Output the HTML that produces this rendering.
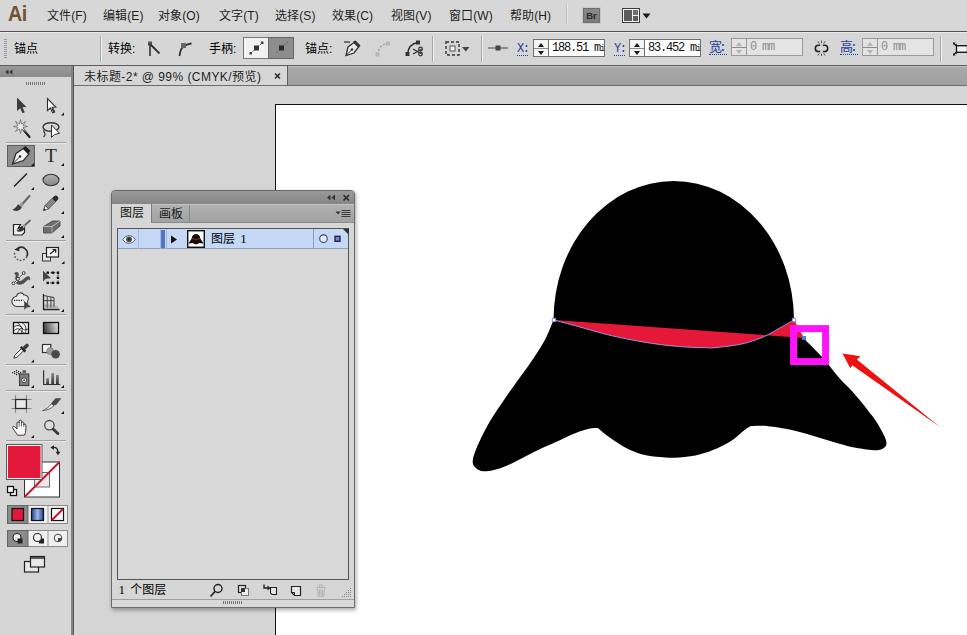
<!DOCTYPE html>
<html lang="zh-CN">
<head>
<meta charset="utf-8">
<title>Ai</title>
<style>
*{box-sizing:border-box;margin:0;padding:0}
html,body{width:967px;height:635px;overflow:hidden;background:#d5d5d5;font-family:"Liberation Sans","Noto Sans CJK SC",sans-serif;color:#222;}
.abs{position:absolute}
#menubar{left:0;top:0;width:967px;height:31px;background:#d7d7d7;}
#menubar .mi{position:absolute;top:7px;font-size:12px;line-height:18px;color:#1e1e1e;white-space:nowrap;letter-spacing:0.1px}
#mline{left:0;top:31px;width:967px;height:1px;background:#505050}
#ctrl{left:0;top:32px;width:967px;height:33px;background:#d6d6d6;border-top:1px solid #ececec}
#ctrl .t{position:absolute;top:7px;font-size:12px;line-height:18px;color:#000;white-space:nowrap}
#tabbar{left:74px;top:66px;width:894px;height:20px;background:linear-gradient(#a8a8a8,#a0a0a0);border-top:1px solid #c2c2c2;border-bottom:1px solid #6c6c6c}
#doctab{letter-spacing:0.45px;left:74px;top:66px;width:214px;height:20px;background:#d6d6d6;border-right:1px solid #5e5e5e;border-bottom:1px solid #6c6c6c;font-size:12px;line-height:23px;color:#1e1e1e;padding-left:10px;white-space:nowrap}
#tools{left:0;top:66px;width:74px;height:569px;background:#d6d6d6;border-right:1px solid #555;box-shadow:inset -2px 0 0 #828282}
#tools .hd{position:absolute;left:0;top:0;width:71px;height:11px;background:linear-gradient(#9a9a9a,#8a8a8a)}
#canvas{left:73px;top:86px;width:894px;height:549px;background:#d5d5d5}
#artboard{left:275px;top:104px;width:700px;height:540px;background:#fff;border:1px solid #111}

#ailogo{left:8px;top:2px;font-size:21.5px;font-weight:bold;line-height:25px;color:#6f5233;letter-spacing:-0.5px;transform:scaleX(0.92);transform-origin:0 0}
#brbtn{left:583px;top:8px;width:17px;height:15px;background:linear-gradient(#8a8a8a,#7c7c7c);border:1px solid #6e6e6e;box-shadow:0 0 0 1px #c8c8c8;color:#2c2c2c;font-size:9.500px;font-weight:bold;line-height:13px;text-align:center}
#ctrl .sep{position:absolute;top:3px;width:2px;height:26px;border-left:1px solid #a8a8a8;border-right:1px solid #ececec}
#ctrl .lbl{position:absolute;top:6px;font-family:"Liberation Mono","Noto Sans CJK SC",monospace;font-size:12px;line-height:20px;color:#1b3f9c;border-bottom:1px dotted #1b3f9c;height:17px;letter-spacing:-1.5px;overflow:hidden}
#ctrl .lbl.cj{font-size:13px;top:4px;height:18px;line-height:22px;overflow:hidden;letter-spacing:-3px;padding-right:3px}
#ctrl .spin{position:absolute;top:6px;width:16px;height:18px;background:#f4f4f4;border:1px solid #6f6f6f}
#ctrl .spin i{position:absolute;left:4px;width:0;height:0;border-left:3px solid transparent;border-right:3px solid transparent}
#ctrl .spin:before{content:"";position:absolute;left:0;top:8px;width:14px;height:1px;background:#8a8a8a}
#ctrl .spin i.u{top:2.5px;border-bottom:4px solid #1a1a1a}
#ctrl .spin i.d{top:10.5px;border-top:4px solid #1a1a1a}
#ctrl .spin.dis{top:5px;background:#e4e4e4;border-color:#9a9a9a}
#ctrl .spin.dis i.u{border-bottom-color:#b4b4b4}
#ctrl .spin.dis i.d{border-top-color:#b4b4b4}
#ctrl .inp{position:absolute;top:6px;height:18px;background:#fff;border:1px solid #6f6f6f;border-left:none;font-family:"Liberation Mono",monospace;font-size:12px;line-height:17px;color:#111;padding-left:3px;white-space:nowrap;overflow:hidden;letter-spacing:-1.2px}
#ctrl .inp.dis{top:5px;background:#e4e4e4;border-color:#9a9a9a;color:#909090}

#layers{left:111px;top:190px;width:244px;height:418px;background:#d6d6d6;border:1px solid #6a6a6a;border-radius:4px 4px 0 0;box-shadow:1px 2px 4px rgba(0,0,0,.35)}
#layers .hd{position:absolute;left:0;top:0;width:242px;height:13px;background:linear-gradient(#9a9a9a,#868686);border-radius:3px 3px 0 0}
#layers .tabs{position:absolute;left:0;top:13px;width:242px;height:19px;background:linear-gradient(#b2b2b2,#a2a2a2);border-top:1px solid #c4c4c4;border-bottom:1px solid #8a8a8a}
#layers .tab1{position:absolute;left:0;top:13px;width:40px;height:19px;background:#d6d6d6;border-right:1px solid #7c7c7c;font-size:12px;line-height:19px;color:#111;padding-left:8px;white-space:nowrap}
#layers .tab2{position:absolute;left:40px;top:14px;width:38px;height:18px;border-right:1px solid #858585;font-size:12px;line-height:18px;color:#1a1a1a;padding-left:7px;white-space:nowrap}
#layers .list{position:absolute;left:5px;top:37px;width:232px;height:352px;background:#d8d8d8;border:1px solid #555}
#layers .row{position:absolute;left:6px;top:38px;width:230px;height:20px;background:#c5d9f7;border-bottom:1px solid #8fa0bd}
#layers .foot{position:absolute;left:0;top:408px;width:242px;height:8px;border-top:1px solid #a0a0a0;background:#dadada}
#layers .foot:after{content:"";position:absolute;left:111px;top:1px;width:20px;height:3px;background:repeating-linear-gradient(90deg,#777 0 1px,transparent 1px 2px)}
</style>
</head>
<body>
<div id="menubar" class="abs">
<span class="abs" id="ailogo">Ai</span>
<span class="mi" style="left:47px">文件(F)</span>
<span class="mi" style="left:103px">编辑(E)</span>
<span class="mi" style="left:158px">对象(O)</span>
<span class="mi" style="left:219px">文字(T)</span>
<span class="mi" style="left:275px">选择(S)</span>
<span class="mi" style="left:332px">效果(C)</span>
<span class="mi" style="left:391px">视图(V)</span>
<span class="mi" style="left:449px">窗口(W)</span>
<span class="mi" style="left:510px">帮助(H)</span>
<div class="abs" style="left:566px;top:3px;width:1px;height:22px;background:#c2c2c2"></div>
<div class="abs" style="left:567px;top:3px;width:1px;height:22px;background:#e6e6e6"></div>
<div class="abs" id="brbtn">Br</div>
<svg class="abs" style="left:622px;top:8px" width="30" height="16" viewBox="0 0 30 16">
<rect x="0.5" y="0.5" width="17" height="14" fill="#f2f2f2" stroke="#3c3c3c"/>
<rect x="2" y="2" width="8" height="11" fill="#5c5c5c"/><rect x="11" y="2" width="5" height="5" fill="#6e6e6e"/><rect x="11" y="8" width="5" height="5" fill="#5c5c5c"/>
<path d="M20.5 5.5h8l-4 5z" fill="#1a1a1a"/></svg>
</div>
<div id="mline" class="abs"></div>
<div id="ctrl" class="abs">
<div class="abs" style="left:4px;top:6px;width:3px;height:20px;background:repeating-linear-gradient(#9a9a9a 0 1px,transparent 1px 2px)"></div>
<span class="t" style="left:14px">锚点</span>
<div class="sep" style="left:100px"></div>
<span class="t" style="left:108px">转换:</span>
<svg class="abs" style="left:147px;top:8px" width="14" height="16" viewBox="0 0 14 16"><rect x="1" y="0.5" width="4" height="4" fill="#555"/><path d="M3 3v12" stroke="#333" stroke-width="1.6" fill="none"/><path d="M3.5 3.5l9 9" stroke="#333" stroke-width="1.8" fill="none"/></svg>
<svg class="abs" style="left:177px;top:8px" width="16" height="16" viewBox="0 0 16 16"><path d="M2.5 15C3.5 8 5 4 14.5 2.5" stroke="#333" stroke-width="1.8" fill="none"/><rect x="4" y="2" width="5" height="5" fill="#666"/></svg>
<span class="t" style="left:209px">手柄:</span>
<div class="abs" style="left:243px;top:4px;width:26px;height:22px;background:#f1f1f1;border:1px solid #777"></div>
<div class="abs" style="left:268px;top:4px;width:26px;height:22px;background:#8d8d8d;border:1px solid #666"></div>
<svg class="abs" style="left:243px;top:4px" width="51" height="22" viewBox="0 0 51 22"><path d="M8 16L19 6" stroke="#555" stroke-width="1" stroke-dasharray="2 1"/><rect x="11" y="8.5" width="5" height="5" fill="#333"/><rect x="6.5" y="15" width="2.5" height="2.5" fill="#444"/><rect x="18" y="4.500" width="2.500" height="2.500" fill="#444"/>
<path d="M33 16L38 11.500" stroke="#666" stroke-width="1" stroke-dasharray="2 1"/><rect x="36" y="8.500" width="5" height="5" fill="#2a2a2a"/><path d="M41 8l4-3" stroke="#666" stroke-width="1" stroke-dasharray="2 1"/></svg>
<span class="t" style="left:305px">锚点:</span>
<svg class="abs" style="left:343px;top:7px" width="18" height="17" viewBox="0 0 18 17"><path d="M1 2h6" stroke="#333" stroke-width="1.3"/><path d="M3 15.500L5 7l6-4.500 4.500 4.500-4.500 6z" fill="#e8e8e8" stroke="#333" stroke-width="1.300"/><path d="M10 1.500l6 6 1.500-2-5-5z" fill="#333"/><path d="M3.500 15l5-5" stroke="#333" stroke-width="1"/><circle cx="9" cy="9.500" r="1.200" fill="#333"/></svg>
<svg class="abs" style="left:375px;top:8px" width="16" height="16" viewBox="0 0 16 16"><path d="M2.500 14C3 8 6 3.500 13 2.500" stroke="#aaa" stroke-width="1.600" stroke-dasharray="2.500 1.500" fill="none"/><rect x="11" y="0.500" width="4" height="4" fill="#b5b5b5"/><rect x="0.500" y="11.500" width="4" height="4" fill="#b5b5b5"/></svg>
<svg class="abs" style="left:405px;top:7px" width="19" height="17" viewBox="0 0 19 17"><path d="M2.500 14.500C3 8 6 3.500 13 2.500" stroke="#333" stroke-width="1.600" fill="none"/><rect x="11" y="0.500" width="4" height="4" fill="#333"/><rect x="0.500" y="12" width="4" height="4" fill="#333"/><path d="M8 9l9 5M8 14l9-5" stroke="#333" stroke-width="1.300"/><circle cx="15.500" cy="9" r="1.800" fill="none" stroke="#333" stroke-width="1.200"/><circle cx="15.500" cy="14" r="1.800" fill="none" stroke="#333" stroke-width="1.200"/></svg>
<div class="sep" style="left:432px"></div>
<svg class="abs" style="left:445px;top:8px" width="26" height="16" viewBox="0 0 26 16"><rect x="1" y="1" width="13" height="13" fill="none" stroke="#333" stroke-width="1.400" stroke-dasharray="3 2"/><rect x="5" y="5" width="5" height="5" fill="#f2f2f2" stroke="#555" stroke-width="1"/><path d="M17 6h7.500l-3.750 4.500z" fill="#444"/></svg>
<div class="sep" style="left:481px"></div>
<svg class="abs" style="left:488px;top:11px" width="21" height="8" viewBox="0 0 21 8"><path d="M0 4h20" stroke="#444" stroke-width="1"/><rect x="7.500" y="1.500" width="5" height="5" fill="#444"/></svg>
<span class="lbl" style="left:517px">X:</span>
<div class="spin" style="left:533px"><i class="u"></i><i class="d"></i></div>
<div class="inp" style="left:549px;width:56px">188.51 m<span style="font-size:9px">i</span></div>
<span class="lbl" style="left:614px">Y:</span>
<div class="spin" style="left:629px"><i class="u"></i><i class="d"></i></div>
<div class="inp" style="left:645px;width:56px">83.452 m<span style="font-size:9px">i</span></div>
<span class="lbl cj" style="left:709px">宽:</span>
<div class="spin dis" style="left:731px"><i class="u"></i><i class="d"></i></div>
<div class="inp dis" style="left:747px;width:56px">0 mm</div>
<svg class="abs" style="left:813.500px;top:6.500px" width="15" height="16.800" viewBox="0 0 17 19"><path d="M7 6H5a3.500 3.500 0 0 0 0 7h2M10 6h2a3.500 3.500 0 0 1 0 7h-2" fill="none" stroke="#222" stroke-width="1.800"/><path d="M8.500 0.500v3M8.500 15.500v3M4.500 1.500l1.500 2.500M12.500 1.500L11 4M4.500 17.500L6 15M12.500 17.500L11 15" stroke="#444" stroke-width="1"/></svg>
<span class="lbl cj" style="left:840px">高:</span>
<div class="spin dis" style="left:862px"><i class="u"></i><i class="d"></i></div>
<div class="inp dis" style="left:878px;width:56px">0 mm</div>
<div class="sep" style="left:940px"></div>
<svg class="abs" style="left:951px;top:7px" width="16" height="18" viewBox="0 0 16 18"><rect x="5.500" y="5.700" width="11" height="6.600" fill="#f4f4f4" stroke="#1a1a1a" stroke-width="1.400"/><path d="M2.500 3l2.500 2.500M2.500 15l2.500-2.500" stroke="#1a1a1a" stroke-width="1.100"/><path d="M2 2.500h2.600L2 5.100zM2 15.500h2.600L2 12.900z" fill="#1a1a1a"/><path d="M5.800 3.600v2.200h-2.200zM5.800 14.400v-2.200h-2.200z" fill="#1a1a1a"/></svg>
</div>
<div id="canvas" class="abs"></div>
<div id="artboard" class="abs"></div>
<svg id="art" class="abs" style="left:0;top:0" width="967" height="635" viewBox="0 0 967 635">
<path d="M553.5,320 A120.25,139 0 0 1 794,320 C795.5,322.8 798.2,330.7 803.0,337.0 C807.8,343.3 817.0,351.2 823.0,358.0 C829.0,364.8 833.8,371.8 839.3,378.0 C844.8,384.2 850.3,389.0 855.8,395.4 C861.3,401.8 868.1,410.2 872.4,416.1 C876.7,422.0 879.2,426.2 881.5,430.5 C883.8,434.8 886.0,439.1 886.4,442.0 C886.8,444.9 885.8,446.4 884.0,447.8 C882.2,449.2 880.4,450.3 875.7,450.3 C871.0,450.3 861.9,448.9 855.8,447.8 C849.7,446.7 844.8,445.2 839.3,443.7 C833.8,442.2 828.2,440.3 822.7,438.7 C817.2,437.1 811.7,435.3 806.2,433.8 C800.7,432.3 795.1,430.8 789.6,429.6 C784.1,428.4 777.9,427.5 773.0,426.8 C768.1,426.1 763.7,425.8 760.0,425.7 C756.3,425.6 752.4,425.9 750.9,426.0 C749.9,426.6 748.1,427.3 744.7,429.9 C741.3,432.4 735.9,437.9 730.6,441.3 C725.3,444.7 718.9,447.8 713.0,450.1 C707.1,452.5 701.9,454.1 695.5,455.4 C689.1,456.7 680.3,457.4 674.4,457.7 C668.5,458.0 665.6,457.6 660.3,457.1 C655.0,456.6 648.6,456.1 642.7,454.5 C636.9,452.9 631.1,450.6 625.2,447.5 C619.4,444.4 612.2,439.2 607.6,436.0 C603.0,432.8 599.5,429.4 597.9,428.1 C596.4,428.2 592.7,428.0 589.0,428.8 C585.3,429.6 580.8,431.1 575.8,433.0 C570.8,434.9 564.8,437.9 559.3,440.4 C553.8,442.9 548.2,445.2 542.7,447.8 C537.2,450.4 531.7,453.3 526.2,456.1 C520.7,458.9 515.1,462.0 509.6,464.4 C504.1,466.8 497.7,469.1 493.0,470.2 C488.3,471.3 484.7,471.7 481.5,471.0 C478.3,470.3 475.4,468.2 474.0,466.0 C472.6,463.8 472.3,461.9 473.2,457.8 C474.1,453.7 476.8,447.3 479.6,441.2 C482.4,435.1 485.7,428.3 489.8,421.4 C493.9,414.5 499.3,406.8 504.0,399.9 C508.7,393.0 513.5,386.3 518.0,380.0 C522.5,373.7 526.3,369.0 530.8,362.3 C535.3,355.6 541.2,346.8 545.0,339.7 C548.8,332.6 552.1,323.3 553.5,320.0 Z" fill="#000"/>
<path d="M554,320 C558.0,321.1 568.6,323.9 578.1,326.5 C587.6,329.1 600.2,333.0 611.2,335.6 C622.2,338.2 633.3,340.4 644.3,342.2 C655.3,344.0 667.3,345.5 677.4,346.4 C687.5,347.3 698.8,347.5 705.0,347.7 C711.2,347.9 709.0,348.2 714.8,347.7 C720.6,347.1 732.7,345.7 739.6,344.4 C746.5,343.1 751.5,341.3 756.2,339.7 C760.9,338.1 763.7,336.9 767.8,334.8 C771.9,332.7 776.6,329.8 781.0,327.3 C785.4,324.8 791.8,321.2 794.0,320.0 L804,338 Z" fill="#e5183a"/>
<path d="M554,320 C558.0,321.1 568.6,323.9 578.1,326.5 C587.6,329.1 600.2,333.0 611.2,335.6 C622.2,338.2 633.3,340.4 644.3,342.2 C655.3,344.0 667.3,345.5 677.4,346.4 C687.5,347.3 698.8,347.5 705.0,347.7 C711.2,347.9 709.0,348.2 714.8,347.7 C720.6,347.1 732.7,345.7 739.6,344.4 C746.5,343.1 751.5,341.3 756.2,339.7 C760.9,338.1 763.7,336.9 767.8,334.8 C771.9,332.7 776.6,329.8 781.0,327.3 C785.4,324.8 791.8,321.2 794.0,320.0 " fill="none" stroke="#9b93dc" stroke-width="1"/>
<rect x="552.300" y="318.300" width="3.400" height="3.400" fill="#fff" stroke="#8a86d6" stroke-width="0.900"/>
<rect x="792.300" y="318.300" width="3.400" height="3.400" fill="#fff" stroke="#8a86d6" stroke-width="0.900"/>
<rect x="802" y="336" width="4" height="4" fill="#4a7fd0"/>
<rect x="793.600" y="328.600" width="32" height="33" fill="none" stroke="#fe14f8" stroke-width="7"/>
<path d="M842.500,353.400 L860.500,356.300 L856.800,359.500 L940,427 L852.300,365.300 L850.300,368.300 Z" fill="#f01010"/>
</svg>
<div id="layers" class="abs">
<div class="hd"></div>
<svg class="abs" style="left:213px;top:2px" width="28" height="10" viewBox="0 0 28 10"><path d="M5.500 1.500v6l-3.500-3zM10 1.500v6l-3.500-3z" fill="#333"/><path d="M18.500 2l5.500 5.500M24 2l-5.500 5.500" stroke="#2a2a2a" stroke-width="1.600"/></svg>
<div class="tabs"></div>
<div class="tab1">图层</div><div class="tab2">画板</div>
<svg class="abs" style="left:223px;top:17.500px" width="16" height="10" viewBox="0 0 16 10"><path d="M0.500 2.500h5l-2.500 3z" fill="#333"/><path d="M6.500 1.500h9M6.500 3.500h9M6.500 5.500h9M6.500 7.500h9" stroke="#3a3a3a" stroke-width="1"/></svg>
<div class="list"></div>
<div class="row">
<svg class="abs" style="left:4px;top:5.500px" width="14" height="9" viewBox="0 0 16 10"><path d="M0.800 5C3 1.500 5.500 0.700 8 0.700S13 1.500 15.200 5C13 8.500 10.500 9.300 8 9.300S3 8.500 0.800 5z" fill="#e8eef8" stroke="#555" stroke-width="1"/><circle cx="8" cy="4.800" r="3.300" fill="#555"/><circle cx="8" cy="4.800" r="1.500" fill="#2a2a2a"/></svg>
<div class="abs" style="left:20px;top:0;width:1px;height:20px;background:#a9b9d6"></div>
<div class="abs" style="left:42px;top:0;width:1px;height:20px;background:#a9b9d6"></div>
<div class="abs" style="left:43px;top:1px;width:4px;height:18px;background:#4f74c8"></div>
<div class="abs" style="left:48px;top:0;width:1px;height:20px;background:#a9b9d6"></div>
<svg class="abs" style="left:52px;top:6px" width="8" height="9" viewBox="0 0 8 9"><path d="M1 0.500l6 4-6 4z" fill="#111"/></svg>
<svg class="abs" style="left:69px;top:1px" width="18" height="18" viewBox="0 0 19 19"><rect x="0.750" y="0.750" width="17.500" height="17.500" fill="#fff" stroke="#111" stroke-width="1.500"/><path d="M5 9C5 2.500 14 2.500 14 9L17.300 14C16 15 14 13.500 12.800 13.800C11.500 15.600 7.500 15.600 6.200 13.800C5 13.500 3 15 1.700 14z" fill="#1a0d08"/><path d="M5 9q4.500 1.800 9 0" stroke="#7a3a30" stroke-width="1" fill="none"/></svg>
<span class="abs" style="left:93px;top:1px;font-size:12px;line-height:18px;color:#000;white-space:nowrap">图层 <span style="font-family:'Liberation Serif',serif;font-size:13px;margin-left:2px">1</span></span>
<div class="abs" style="left:195px;top:0;width:1px;height:20px;background:#8f9db8"></div>
<svg class="abs" style="left:199px;top:0" width="32" height="20" viewBox="0 0 32 20"><circle cx="6.500" cy="9.700" r="3.800" fill="#e4ecfa" stroke="#3a4560" stroke-width="1.100"/><rect x="18" y="7.300" width="5" height="5" fill="#7884c4" stroke="#141c4c" stroke-width="1.300"/><path d="M26 0h6v6z" fill="#333"/></svg>
</div>
<span class="abs" style="left:6.500px;top:390.500px;font-size:12px;line-height:16px;color:#000;white-space:nowrap"><span style="font-family:'Liberation Serif',serif;font-size:13px;margin-right:2px">1</span> 个图层</span>
<svg class="abs" style="left:96px;top:391px" width="146" height="18" viewBox="0 0 146 18">
<circle cx="10" cy="6.500" r="4" fill="none" stroke="#222" stroke-width="1.400"/><path d="M7 9.500l-4.500 5" stroke="#222" stroke-width="1.700"/>
<rect x="30.500" y="3.500" width="7" height="7" fill="#ddd" stroke="#222" stroke-width="1.200"/><rect x="33.500" y="6.500" width="7" height="7" fill="#eee" stroke="#777" stroke-width="1"/><rect x="33" y="6" width="4" height="4" fill="#333"/>
<path d="M56 2.500v3.500h5" fill="none" stroke="#222" stroke-width="1.400"/><path d="M59.500 3.500l3 2.500-3 2.500z" fill="#222"/><path d="M62.500 5.500h6v7h-4.500l-1.500-1.500z" fill="#e8e8e8" stroke="#222" stroke-width="1.100"/>
<path d="M83.500 4.500h9v9h-6l-3-3z" fill="#e8e8e8" stroke="#222" stroke-width="1.200"/><path d="M83.500 10.500h3v3" fill="none" stroke="#222" stroke-width="1"/>
<path d="M108.500 5.500h9M111.500 5v-2h3v2M109.500 6.500l0.800 8h5.400l0.800-8M111.500 7.500v6M113 7.500v6M114.500 7.500v6" fill="none" stroke="#b2b2b2" stroke-width="1"/>
<g fill="#888"><rect x="142" y="6" width="1" height="1"/><rect x="140" y="8" width="1" height="1"/><rect x="142" y="8" width="1" height="1"/><rect x="138" y="10" width="1" height="1"/><rect x="140" y="10" width="1" height="1"/><rect x="142" y="10" width="1" height="1"/><rect x="136" y="12" width="1" height="1"/><rect x="138" y="12" width="1" height="1"/><rect x="140" y="12" width="1" height="1"/><rect x="142" y="12" width="1" height="1"/><rect x="134" y="14" width="1" height="1"/><rect x="136" y="14" width="1" height="1"/><rect x="138" y="14" width="1" height="1"/><rect x="140" y="14" width="1" height="1"/><rect x="142" y="14" width="1" height="1"/></g>
</svg>
<div class="foot"></div>
</div>
<div id="tabbar" class="abs"></div>
<div id="doctab" class="abs">未标题-2* @ 99% (CMYK/预览)<svg class="abs" style="left:199.500px;top:7px" width="8" height="7" viewBox="0 0 8 7"><path d="M1 0.500l5 5M6 0.500L1 5.500" stroke="#2a2a2a" stroke-width="1.500"/></svg></div>
<div class="abs" style="left:0;top:65px;width:967px;height:1px;background:#5c5c5c"></div>
<div id="tools" class="abs"><div class="hd"></div>
<svg class="abs" style="left:0;top:-2px" width="72" height="571" viewBox="0 64 72 571" font-family="Liberation Serif, serif">
<defs>
<linearGradient id="gEl" x1="0" y1="0" x2="0" y2="1"><stop offset="0" stop-color="#b4b4b4"/><stop offset="1" stop-color="#858585"/></linearGradient>
<linearGradient id="gGr" x1="0" y1="0.600" x2="1" y2="0.400"><stop offset="0" stop-color="#3a3a3a"/><stop offset="1" stop-color="#e2e2e2"/></linearGradient>
<linearGradient id="gBl" x1="0" y1="0" x2="1" y2="0"><stop offset="0" stop-color="#1d3f8f"/><stop offset="0.5" stop-color="#9db8e8"/><stop offset="1" stop-color="#1d3f8f"/></linearGradient>
<linearGradient id="gBar" x1="0" y1="0" x2="0" y2="1"><stop offset="0" stop-color="#888"/><stop offset="1" stop-color="#333"/></linearGradient>
</defs>
<!-- header arrows & grip -->
<path d="M8.500 69.500v5l-3.500-2.500zM12.500 69.500v5l-3.500-2.500z" fill="#3a3a3a"/>
<path d="M26.500 82v3M28.500 82v3M30.500 82v3M32.500 82v3M34.500 82v3M36.500 82v3M38.500 82v3M40.500 82v3M42.500 82v3M44.500 82v3" stroke="#777" stroke-width="1"/>
<!-- dividers -->
<g stroke="#a2a2a2" stroke-width="1"><path d="M6 142.500h60M6 240.500h60M6 314.500h60M6 364.500h60M6 390.500h60M6 440.500h60"/></g>
<g stroke="#e9e9e9" stroke-width="1"><path d="M6 143.500h60M6 241.500h60M6 315.500h60M6 365.500h60M6 391.500h60M6 441.500h60"/></g>
<!-- small corner triangles -->
<g fill="#111">
<path d="M64 112.500v3h-3z"/><path d="M64 163v3h-3z"/><path d="M34 187v3h-3z"/><path d="M64 187v3h-3z"/>
<path d="M64 211v3h-3z"/><path d="M64 235v3h-3z"/><path d="M34 261v3h-3z"/><path d="M64.500 261v3h-3z"/><path d="M34 285v3h-3z"/>
<path d="M34 309v3h-3z"/><path d="M64 309v3h-3z"/><path d="M34 359.500v3h-3z"/><path d="M34 385v3h-3z"/><path d="M64 385v3h-3z"/>
<path d="M64 411v3h-3z"/><path d="M34 435v3h-3z"/>
</g>
<!-- row1: selection arrows -->
<path d="M17 97.500v13.500l3.200-2.800 2.300 5 2.300-1-2.300-4.900 4-0.300z" fill="#3c3c3c"/>
<path d="M47.500 98.500v12l2.900-2.500 2.300 4.700 1.800-0.800-2.300-4.600 3.600-0.300z" fill="#fff" stroke="#2e2e2e" stroke-width="1.100"/>
<path d="M51.500 108.500l2.200 4.200 1.600-0.800-2.100-4.100z" fill="#3c3c3c"/>
<!-- row2: wand, lasso -->
<path d="M22 128l7.500 9" stroke="#222" stroke-width="2.200" stroke-linecap="round"/>
<path d="M20.500 119.500l1 4.500 4-2.500-2.500 4 4.500 1-4.500 1 2.500 4-4-2.500-1 4.500-1-4.500-4 2.500 2.500-4-4.500-1 4.500-1-2.500-4 4 2.500z" fill="#eee" stroke="#6a6a6a" stroke-width="0.800"/>
<ellipse cx="51" cy="127" rx="8" ry="4.300" fill="none" stroke="#333" stroke-width="1.400"/>
<path d="M44 130c-1.500 2 1.500 2.500 1 4.500s-1 2-1.500 2.500" fill="none" stroke="#333" stroke-width="1.200"/>
<path d="M51.500 125v12.500l3-3 5 -1.200z" fill="#fff" stroke="#2e2e2e" stroke-width="1"/>
<!-- row3: pen (selected), T -->
<rect x="7.500" y="145.500" width="27" height="21" fill="#8e8e8e" stroke="#5e5e5e"/><path d="M34 163v3h-3z" fill="#111"/>
<path d="M12.500 164l3.500-10.500 7.500-5 5.500 5.500-5.500 6.500z" fill="#f2f2f2" stroke="#2a2a2a" stroke-width="1.200"/>
<path d="M22.800 148.300l2.600-2.400 5 4.800-2.600 3z" fill="#1c1c1c"/>
<path d="M13 163.500l6-6" stroke="#2a2a2a" stroke-width="1"/><circle cx="20" cy="156.500" r="1.200" fill="#1c1c1c"/>
<text x="51" y="161.600" font-size="19.500" text-anchor="middle" fill="#2b2b2b">T</text>
<!-- row4: line, ellipse -->
<path d="M14 186.500l13-13" stroke="#222" stroke-width="1.500"/>
<ellipse cx="51" cy="180" rx="8" ry="5.700" fill="url(#gEl)" stroke="#333" stroke-width="1.100"/>
<!-- row5: brush, pencil -->
<path d="M29.500 196l-7.500 8.500" stroke="#6a6a6a" stroke-width="2.200" stroke-linecap="round"/><path d="M22.800 203.300l-2.600 3" stroke="#9c9c9c" stroke-width="3.400"/>
<path d="M12.300 209.500C15 208.800 16.500 206.500 18.200 204.300L21.800 207.500C20 210.800 15.500 212.200 12.300 209.500z" fill="#3a3a3a"/>
<g transform="translate(43.400,210.600) rotate(-45)"><path d="M0 0l5-2.400v4.800z" fill="#f0f0f0" stroke="#333" stroke-width="0.800"/><path d="M0 0l2-1v2z" fill="#111"/><rect x="5" y="-2.400" width="10" height="4.800" fill="#9a9a9a" stroke="#333" stroke-width="0.800"/><path d="M5 -0.800h10M5 0.800h10" stroke="#555" stroke-width="0.600"/><path d="M15 -2.600h2.500a2.600 2.600 0 0 1 0 5.200h-2.500z" fill="#2a2a2a"/></g>
<!-- row6: blob brush, eraser -->
<path d="M13.500 224.500h7l-2.500 4 6.500-2.500v6.500l-2.500 2.500h-8.500z" fill="#f0f0f0" stroke="#222" stroke-width="1.200"/>
<path d="M30 220.500l-5.500 5" stroke="#666" stroke-width="1.800" stroke-linecap="round"/><path d="M25 225l-1.800 1.800" stroke="#999" stroke-width="2.600"/><path d="M16.300 230.800C18.800 230.200 20 228 21.500 226L24.500 228.800C23 231.500 19 232.800 16.300 230.800z" fill="#333"/>
<path d="M43.500 226.500l9-5.500h7.500v5l-8 7h-8.500z" fill="#6e6e6e" stroke="#444" stroke-width="0.800"/><path d="M43.500 226.500h8.500l8-5.500" fill="none" stroke="#bcbcbc" stroke-width="1"/><path d="M52 226.500v6.500" stroke="#bcbcbc" stroke-width="0.800"/>
<!-- row7: rotate, scale -->
<path d="M18.300 248a6.300 6.300 0 0 1 8.400 8.600" fill="none" stroke="#2a2a2a" stroke-width="1.600"/><path d="M26.700 256.600a6.300 6.300 0 0 1-11.700-5" fill="none" stroke="#555" stroke-width="1.500" stroke-dasharray="1.600 1.700"/>
<path d="M14.300 249.800l5-3.300v4.800z" fill="#2a2a2a"/>
<rect x="42.500" y="253.500" width="8" height="7.500" fill="#e4e4e4" stroke="#333" stroke-width="1"/><rect x="46.500" y="247.500" width="12" height="9.500" fill="#f2f2f2" stroke="#222" stroke-width="1.200"/>
<path d="M50 254l5.500-4.500M52.500 249.500h3.200v3.200" fill="none" stroke="#222" stroke-width="1.200"/>
<!-- row8: warp, free transform -->
<path d="M14 273.500c1.500-2.500 5-2 4.800 1 c-0.200 2.500-2.300 5 0.200 6.300 c2.500 1.200 5-2.800 7.800-4.300 c2.500-1.300 4.200 1 3.200 4 c-0.600-1.200-1.800-1.200-3.200 0.200 c-2 2-4.800 4.800-8.600 3.800 c-3.400-1-3.600-4.600-2.800-7 c0.600-1.800 0.200-3.400-1.400-4z" fill="#505050"/>
<path d="M13.500 283.300L23.700 273" stroke="#fff" stroke-width="2.400"/><path d="M13.500 283.300L23.700 273" stroke="#222" stroke-width="1"/><circle cx="13.500" cy="283.300" r="1.400" fill="#fff" stroke="#222" stroke-width="0.900"/><circle cx="23.700" cy="273" r="1.400" fill="#fff" stroke="#222" stroke-width="0.900"/><circle cx="17.900" cy="278.900" r="1.500" fill="#fff" stroke="#222" stroke-width="0.900"/>
<path d="M47.700 272.700H58V282.900H47.700" fill="none" stroke="#333" stroke-width="1" stroke-dasharray="1.500 1.500"/>
<g fill="#111"><rect x="46.500" y="271.500" width="2.400" height="2.400"/><rect x="51.700" y="271.500" width="2.400" height="2.400"/><rect x="56.800" y="271.500" width="2.400" height="2.400"/><rect x="56.800" y="276.600" width="2.400" height="2.400"/><rect x="56.800" y="281.700" width="2.400" height="2.400"/><rect x="51.700" y="281.700" width="2.400" height="2.400"/><rect x="46.500" y="281.700" width="2.400" height="2.400"/></g>
<path d="M43 270.800v10.700l2.800-2.700 5.200-0.500z" fill="#444"/>
<!-- row9: shape builder, perspective grid -->
<path d="M16.500 296.300a4 4 0 0 1 7.500-1.300a4 4 0 0 1 3.500 6.500a3.500 3.500 0 0 1-3.500 5h-6.500a4.800 4.800 0 0 1-1-10.200z" fill="#ececec" stroke="#444" stroke-width="1.100"/>
<path d="M14 300.300h9.500" stroke="#111" stroke-width="1.300" stroke-dasharray="1.200 1.100"/>
<path d="M24.200 300.800v9l2.400-2.300 4.300-0.500z" fill="#444"/>
<path d="M43.500 294v15.500h16" fill="none" stroke="#222" stroke-width="1.300"/><path d="M43.500 295.500l10.500 2v9.500M47.300 296.200v11.500M50.900 297v10.500M43.500 300.600h10.500" stroke="#333" stroke-width="0.900" fill="none"/><path d="M44 307h14M44 305.200h11" stroke="#777" stroke-width="0.700"/>
<!-- row10: mesh, gradient -->
<rect x="13.500" y="322.500" width="15" height="11" fill="#f4f4f4" stroke="#111" stroke-width="1.300"/>
<path d="M13.500 327.500c3-3 6-2.500 8.500 0.500s4 1.500 6.500 1M13.500 331.500c2.500-3 5-3.500 7-1.500s3 3 4 3.500M17 322.500c2.500 2 4.500 4 5 5.500s0 4-1 5.500M22 322.500c2.500 1.500 4 4 4 6.500s-0.500 3-1 4.500M17.500 333.500c0.500-2.500 2-4.500 4.500-5.500" fill="none" stroke="#222" stroke-width="0.900"/>
<rect x="43.500" y="322.500" width="15" height="11" fill="url(#gGr)" stroke="#111" stroke-width="1.300"/>
<!-- row11: eyedropper, blend -->
<g transform="translate(13.900,358.100) rotate(-44)"><path d="M0 0l2.500-1.500h10v3h-10z" fill="#f4f4f4" stroke="#333" stroke-width="0.900"/><rect x="11.500" y="-3.300" width="2.600" height="6.600" fill="#2a2a2a"/><path d="M14 -1.800h4.200a1.800 1.800 0 0 1 0 3.600h-4.200z" fill="#3a3a3a"/></g>
<rect x="42.500" y="344.500" width="8.300" height="8" fill="#f4f4f4" stroke="#333" stroke-width="1.200"/><circle cx="50.100" cy="351" r="3.500" fill="#9c9c9c" stroke="#777" stroke-width="0.600"/><circle cx="55.600" cy="354.200" r="4.300" fill="#4a4a4a"/>
<!-- row12: spray, graph -->
<rect x="19.500" y="374" width="9.300" height="11.500" fill="#808080" stroke="#3a3a3a" stroke-width="1.100"/><rect x="22.500" y="370.300" width="3.400" height="2.600" fill="#555"/><circle cx="24.100" cy="380.200" r="2.500" fill="#f6f6f6" stroke="#333" stroke-width="0.900"/><circle cx="24.100" cy="380.200" r="0.900" fill="#333"/>
<g fill="#2a2a2a"><rect x="12" y="372" width="1.200" height="1.200"/><rect x="14" y="371" width="1.200" height="1.200"/><rect x="14" y="373" width="1.200" height="1.200"/><rect x="16" y="372" width="1.200" height="1.200"/><rect x="16" y="370" width="1.200" height="1.200"/><rect x="18" y="371" width="1.200" height="1.200"/><rect x="18" y="373" width="1.200" height="1.200"/><rect x="20" y="372" width="1.200" height="1.200"/><rect x="16" y="374" width="1.200" height="1.200"/></g>
<path d="M43.600 370.300v14.200h16.700" fill="none" stroke="#333" stroke-width="1.200"/><rect x="46.200" y="378.200" width="2.800" height="6" fill="url(#gBar)"/><rect x="51.300" y="373.100" width="2.800" height="11" fill="url(#gBar)"/><rect x="56" y="375" width="2.800" height="9" fill="url(#gBar)"/>
<!-- row13: artboard, slice -->
<path d="M15.600 395v18M26.400 395v18M11.500 399.500h20M11.500 408.500h20" stroke="#8a8a8a" stroke-width="1"/>
<rect x="15.600" y="399.500" width="10.800" height="9" fill="#ebebeb" stroke="#2a2a2a" stroke-width="1.300"/>
<path d="M42.500 410.700c3-1 6.500-3.500 9-7l2.500 2c-3 3-7 4.700-11.500 5z" fill="#f2f2f2" stroke="#555" stroke-width="0.900"/><path d="M51 403.500l4.500-5.200h5.800l-4.800 6.200-3 1.200z" fill="#4a4a4a"/>
<!-- row14: hand, zoom -->
<path d="M17.500 435.200c-1-2.200-4.300-5.800-4.800-7.400s1.200-2 2.600-0.600l1.700 1.800v-6c0-1.500 2-1.500 2.200 0v-1.800c0-1.500 2.200-1.500 2.300 0v1.800c0-1.400 2.200-1.400 2.300 0.100v1.900c0-1.300 2.100-1.300 2.100 0.200 0 4 0.300 6.200-1.400 10z" fill="#f6f6f6" stroke="#3a3a3a" stroke-width="1"/>
<path d="M19.200 423v3.500M21.500 423v3.500M23.800 424v3" stroke="#3a3a3a" stroke-width="0.700"/>
<circle cx="49.400" cy="425.200" r="4.700" fill="#dcdcdc" stroke="#4a4a4a" stroke-width="1.300"/><path d="M53.300 429.300l4.700 4.300" stroke="#3a3a3a" stroke-width="2.800" stroke-linecap="round"/>
<!-- fill/stroke -->
<rect x="24.500" y="462" width="35" height="35" fill="#fff" stroke="#333" stroke-width="1"/>
<rect x="34.500" y="472.500" width="15" height="14.500" fill="#f3e6e6" stroke="#6a6a6a" stroke-width="1"/>
<path d="M25 496.500l34-34" stroke="#c8152d" stroke-width="2"/>
<rect x="6.500" y="444.500" width="35.500" height="35" fill="#f0f0f0" stroke="#5a5a5a" stroke-width="1"/>
<rect x="8" y="446" width="32.500" height="32" fill="#e4183a"/>
<path d="M52.500 447.500c3.500-0.500 5.500 1 5.500 5" fill="none" stroke="#222" stroke-width="1.400"/><path d="M50.300 447.600l3.600-2.400v4.600zM55.600 451.800h4.800l-2.400 3.400z" fill="#222"/>
<rect x="10.500" y="489.500" width="6" height="6" fill="#fff" stroke="#111" stroke-width="1.300"/><rect x="7.500" y="486.500" width="6" height="6" fill="#fff" stroke="#111" stroke-width="1.300"/>
<!-- color mode buttons -->
<rect x="7.500" y="505.500" width="60" height="18" fill="#f0f0f0" stroke="#8a8a8a"/>
<rect x="7.500" y="505.500" width="20.500" height="18" fill="#8a8a8a" stroke="#666"/>
<path d="M48 505.500v18" stroke="#9a9a9a"/>
<rect x="12" y="508.500" width="11.500" height="12" fill="#e4183a" stroke="#111" stroke-width="1.200"/>
<rect x="31.500" y="508.500" width="12" height="12" fill="url(#gBl)" stroke="#111" stroke-width="1.200"/>
<rect x="51.500" y="508.500" width="12" height="12" fill="#fff" stroke="#111" stroke-width="1.200"/><path d="M52 520l11-11" stroke="#c8152d" stroke-width="2"/>
<!-- draw mode buttons -->
<rect x="7.500" y="530.500" width="60" height="16" fill="#f0f0f0" stroke="#8a8a8a"/>
<rect x="7.500" y="530.500" width="20.500" height="16" fill="#8a8a8a" stroke="#666"/>
<path d="M48 530.500v16" stroke="#9a9a9a"/>
<circle cx="17" cy="537.500" r="4" fill="#e8e8e8" stroke="#222" stroke-width="1.100"/><rect x="17.500" y="538.500" width="5" height="5" fill="#222"/>
<rect x="39" y="538.500" width="5" height="5" fill="#222"/><circle cx="37.500" cy="537.500" r="4" fill="#f4f4f4" stroke="#222" stroke-width="1.100"/>
<circle cx="58" cy="538" r="3.800" fill="#f4f4f4" stroke="#444" stroke-width="1"/><path d="M58 538h3.800a3.800 3.800 0 0 1-3.800 3.800z" fill="#444"/>
<!-- screen mode -->
<rect x="24.500" y="561.500" width="14" height="10.500" fill="#e8e8e8" stroke="#222" stroke-width="1.200"/><rect x="30.500" y="556.500" width="14" height="10.500" fill="#e8e8e8" stroke="#222" stroke-width="1.200"/><path d="M30.500 558h14" stroke="#222" stroke-width="1.400"/>
</svg>
</div>
</body>
</html>
